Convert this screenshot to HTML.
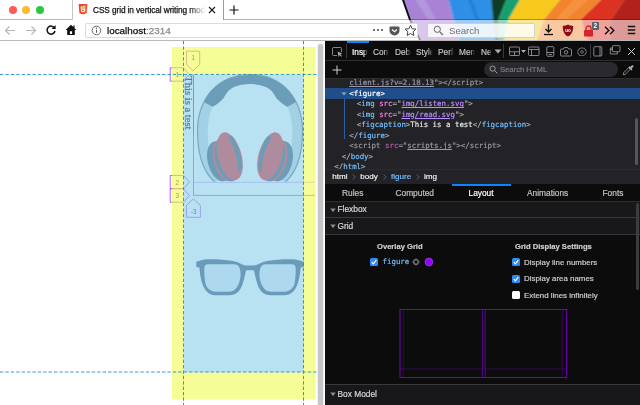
<!DOCTYPE html>
<html lang="en">
<head>
<meta charset="utf-8">
<title>CSS grid in vertical writing mode</title>
<style>
*{box-sizing:border-box;margin:0;padding:0}
html,body{width:640px;height:405px;overflow:hidden;background:#fff}
body{position:relative;font-family:"Liberation Sans",sans-serif;font-size:8px;color:#0c0c0d}
.abs{position:absolute}
#stage{position:absolute;left:0;top:0;width:640px;height:405px;overflow:hidden;will-change:transform}
/* ---------- browser chrome ---------- */
#chrome{position:absolute;left:0;top:0;width:640px;height:41px;overflow:hidden;background:#fff}
#flag{position:absolute;left:0;top:0;width:640px;height:41px}
#navveil{position:absolute;left:0;top:20px;width:640px;height:21px;background:rgba(255,255,255,.55)}
#tabline{position:absolute;left:0;top:19px;width:640px;height:1px;background:rgba(0,0,0,.28)}
#chromeline{position:absolute;left:0;top:40px;width:640px;height:1px;background:#b9b9b9}
#tab{position:absolute;left:72px;top:0;width:152px;height:20px;background:#fff;border-left:1px solid #c4c4c4;border-right:1px solid #9a9a9a}
#tabtitle{-webkit-text-stroke:.25px currentColor;position:absolute;left:93px;top:4px;width:112px;height:12px;font-size:8.3px;letter-spacing:-.1px;line-height:12px;white-space:nowrap;overflow:hidden;color:#111;
 -webkit-mask-image:linear-gradient(90deg,#000 86%,transparent 100%);mask-image:linear-gradient(90deg,#000 86%,transparent 100%)}
.tl{position:absolute;top:6px;width:8px;height:8px;border-radius:50%}
#urlbar{position:absolute;left:85px;top:23px;width:333px;height:15px;background:#fff;border:1px solid #dadada;border-radius:2px}
#urltext{-webkit-text-stroke:.25px currentColor;position:absolute;left:107px;top:24px;font-size:9.9px;line-height:13px;white-space:nowrap;color:#0c0c0d}
#urltext span{color:#8a8a8a}
#searchbar{position:absolute;left:427px;top:23px;width:108px;height:15px;background:rgba(255,255,255,.8);border:1px solid rgba(190,190,190,.7);border-radius:2px}
#searchtext{position:absolute;left:449px;top:24px;font-size:9.6px;line-height:13px;color:#6f6f6f}
/* ---------- page ---------- */
#page{position:absolute;left:0;top:41px;width:325px;height:364px;background:#fff;overflow:hidden}
#pscroll{position:absolute;left:318.200px;top:43.500px;width:5.200px;height:370px;background:#c6c6c6;border-radius:2.600px;box-shadow:0 0 0 .5px #e4e4e4}
#splitter{display:none}
/* ---------- devtools ---------- */
#dt{-webkit-text-stroke-width:.18px;position:absolute;left:325px;top:41px;width:315px;height:364px;background:#232327;overflow:hidden;color:#b1b1b3;font-size:7.6px}

#dti{position:absolute;left:-325px;top:-41px;width:640px;height:405px}
.ttab{position:absolute;top:46px;height:12px;font-size:8.300px;line-height:12px;white-space:nowrap;overflow:hidden;color:#c4c4c7;
 -webkit-mask-image:linear-gradient(90deg,#000 70%,transparent 100%);mask-image:linear-gradient(90deg,#000 70%,transparent 100%)}
.ttab.sel{color:#fff}
.ml{position:absolute;font-family:"DejaVu Sans Mono","Liberation Mono",monospace;font-size:7.425px;line-height:11px;white-space:pre;color:#a9a9ac}
.ml i{font-style:normal;color:#75bfff}
.ml b{font-weight:normal;color:#ff7de9}
.ml u{color:#b98eff}
.ml em{font-style:normal;color:#e6e6e8}
.ml.dim{color:#98989c}.ml.dim i{color:#98989c}.ml.dim b{color:#b45aa6}.ml.dim u{color:#9d9aa8}
.ml.selrow{color:#fff}
.bc{position:absolute;top:171px;font-size:8.100px;line-height:11px;color:#f0f0f2;white-space:nowrap}
.bcs{position:absolute;top:171px;font-size:8.500px;line-height:11px;color:#6f7f99}
.stab{position:absolute;top:188px;font-size:8.350px;line-height:11px;color:#c4c4c7;white-space:nowrap}

.acc{position:absolute;left:325px;width:315px;height:16px;background:#18181a}
.accl{position:absolute;left:325px;width:315px;height:1px;background:#38383d}
.acct{position:absolute;left:337.500px;font-size:8.350px;line-height:11px;color:#d7d7db;white-space:nowrap}
.gh{position:absolute;font-size:7.600px;font-weight:bold;line-height:11px;color:#d0d0d3;white-space:nowrap}
.gl{position:absolute;left:524px;font-size:7.900px;line-height:11px;color:#d0d0d3;white-space:nowrap}
.cb{position:absolute;width:8px;height:8px;border-radius:1.500px;background:#fff}
.cb.on{background:#2b8cf7}
.cb svg{position:absolute;left:0;top:0}
</style>
</head>
<body>
<div id="stage">

<!-- ======= BROWSER CHROME ======= -->
<div id="chrome">
  <svg id="flag" viewBox="0 0 640 41" preserveAspectRatio="none">
    <defs><filter id="fb" x="-5%" y="-20%" width="110%" height="140%"><feGaussianBlur stdDeviation="1.100 .6"/></filter></defs>
    <g filter="url(#fb)">
      <polygon points="402.500,-2 409.900,19.5 421.500,43 459.5,43 453.6,19.5 448.2,-2" fill="#a882d4"/>
      <polygon points="448.2,-2 453.6,19.5 459.5,43 495.500,43 493,19.5 491,-2" fill="#2e8fe6"/>
      <polygon points="491,-2 493,19.5 495.500,43 498.500,43 498.500,19.5 507,-2" fill="#0d3d26"/>
      <polygon points="507,-2 498.500,19.5 498.500,43 504,43 508.500,19.5 521,-2" fill="#18a070"/>
      <polygon points="521,-2 508.500,19.5 504,43 536,43 544,19.5 561.5,-2" fill="#f6c91c"/>
      <polygon points="561.5,-2 544,19.5 536,43 589,43 581,19.5 603,-2" fill="#f2842e"/>
      <polygon points="603,-2 581,19.5 589,43 611,43 611,19.5 625.5,-2" fill="#dc3320"/>
      <polygon points="625.5,-2 611,19.5 611,43 650,43 650,19.5 650,-2" fill="#b2211c"/>
      <polygon points="414,-2 424,-2 436,19.5 428,19.5" fill="#b79be0" opacity=".8"/>
      <polygon points="468,-2 471,-2 479,19.5 476,19.5" fill="#1f74c8" opacity=".7"/>
      <polygon points="575,-2 590,-2 566,19.5 556,19.5" fill="#f7984a" opacity=".7"/>
    </g>
    <polygon points="401.300,-2 403.500,-2 410.900,19.500 422.600,43 420.600,43 408.900,19.500" fill="#120e16"/>
  </svg>
  <div id="navveil"></div>
  <div id="tabline"></div>
  <div id="tab"></div>
  <div class="tl" style="left:9px;background:#fc5b57"></div>
  <div class="tl" style="left:22px;background:#fdbc2e"></div>
  <div class="tl" style="left:36px;background:#28c93f"></div>
  <!-- html5 favicon -->
  <svg class="abs" style="left:78px;top:4px" width="10" height="11" viewBox="0 0 10 11">
    <path d="M0.6 0h8.8l-0.8 9.2L5 10.4 1.4 9.2z" fill="#e44d26"/>
    <path d="M5 0.8v8.8l2.9-0.9 0.7-7.9z" fill="#f16529"/>
    <path d="M2.6 2.4h4.9l-.1 1.2H3.8l.1 1h3.4l-.3 3L5 8.2l-2-.6-.1-1.500h1.100l.1.700.9.300.9-.3.100-1.100H2.900z" fill="#fff"/>
  </svg>
  <div id="tabtitle">CSS grid in vertical writing mode</div>
  <svg class="abs" style="left:208px;top:6px" width="8" height="8" viewBox="0 0 8 8"><path d="M1 1l6 6M7 1l-6 6" stroke="#1a1a1a" stroke-width="1.1" fill="none"/></svg>
  <svg class="abs" style="left:229px;top:5px" width="10" height="10" viewBox="0 0 10 10"><path d="M5 0.500v9M0.500 5h9" stroke="#111" stroke-width="1.2" fill="none"/></svg>

  <!-- nav buttons -->
  <svg class="abs" style="left:4px;top:25px" width="12" height="11" viewBox="0 0 12 11"><path d="M11 5.500H1.500M5.500 1.500l-4 4 4 4" stroke="#b4b4b4" stroke-width="1.100" fill="none"/></svg>
  <svg class="abs" style="left:25px;top:25px" width="12" height="11" viewBox="0 0 12 11"><path d="M1 5.500h9.500M6.500 1.500l4 4-4 4" stroke="#b4b4b4" stroke-width="1.100" fill="none"/></svg>
  <svg class="abs" style="left:45px;top:24px" width="12" height="12" viewBox="0 0 12 12"><path d="M9.600 4.200A4 4 0 1 0 10 7" stroke="#111" stroke-width="1.500" fill="none"/><path d="M10.600 1v4h-4z" fill="#111"/></svg>
  <svg class="abs" style="left:65px;top:24px" width="12" height="12" viewBox="0 0 12 12"><path d="M6 0.800L0.600 6h1.600v5h7.600V6h1.600L9.600 4.300V1.500H8.400v1.600zM4.900 7.300h2.200v2.600H4.900z" fill="#111" fill-rule="evenodd"/></svg>

  <div id="urlbar"></div>
  <svg class="abs" style="left:91px;top:25px" width="11" height="11" viewBox="0 0 11 11"><circle cx="5.500" cy="5.500" r="4.300" fill="none" stroke="#5a5a5a" stroke-width=".9"/><path d="M5.500 4.800v3" stroke="#5a5a5a" stroke-width="1"/><circle cx="5.500" cy="3.300" r=".7" fill="#5a5a5a"/></svg>
  <div id="urltext">localhost<span>:2314</span></div>
  <!-- page actions -->
  <svg class="abs" style="left:372px;top:28px" width="12" height="4" viewBox="0 0 12 4"><circle cx="2" cy="2" r="1.100" fill="#555"/><circle cx="6" cy="2" r="1.100" fill="#555"/><circle cx="10" cy="2" r="1.100" fill="#555"/></svg>
  <svg class="abs" style="left:389px;top:26px" width="11" height="10" viewBox="0 0 11 10"><path d="M1.500 0.500h8a1 1 0 0 1 1 1v3a5 5 0 0 1-10 0v-3a1 1 0 0 1 1-1z" fill="#555"/><path d="M3 3.500l2.500 2.300L8 3.500" stroke="#fff" stroke-width="1.200" fill="none"/></svg>
  <svg class="abs" style="left:404px;top:24px" width="13" height="13" viewBox="0 0 13 13"><path d="M6.500 1.200l1.600 3.500 3.800.4-2.800 2.600.8 3.800-3.400-2-3.400 2 .8-3.800L1.100 5.100l3.800-.4z" fill="none" stroke="#444" stroke-width="1"/></svg>

  <div id="searchbar"></div>
  <svg class="abs" style="left:433px;top:25px" width="11" height="11" viewBox="0 0 11 11"><circle cx="4.300" cy="4.300" r="3.100" fill="none" stroke="#666" stroke-width="1"/><path d="M6.600 6.600l3.400 3.400" stroke="#666" stroke-width="1.200"/></svg>
  <div id="searchtext">Search</div>

  <!-- toolbar icons right -->
  <svg class="abs" style="left:543px;top:24px" width="11" height="12" viewBox="0 0 11 12"><path d="M5.500 0.500v7M2.500 5l3 3 3-3" stroke="#111" stroke-width="1.300" fill="none"/><path d="M1 10.500h9" stroke="#111" stroke-width="1.300"/></svg>
  <svg class="abs" style="left:562px;top:24px" width="12" height="13" viewBox="0 0 12 13"><path d="M6 0.500c1.800 1 3.400 1.300 5.200 1.400 0 5-1.200 8.300-5.200 10.600C2 10.200.8 6.900.8 1.900 2.600 1.800 4.200 1.500 6 .5z" fill="#8f0a12"/><text x="6" y="8.300" font-size="4.500" font-weight="bold" fill="#fff" text-anchor="middle" font-family="Liberation Sans, sans-serif">uo</text></svg>
  <svg class="abs" style="left:583px;top:25px" width="11" height="12" viewBox="0 0 11 12"><path d="M3 5V3.500a2.500 2.500 0 0 1 5 0V5" fill="none" stroke="#d7232c" stroke-width="1.400"/><rect x="1" y="5" width="9" height="6.500" rx=".8" fill="#d7232c"/></svg>
  <div class="abs" style="left:591.500px;top:21.500px;width:7.500px;height:8px;background:#5b6166;border-radius:1px;color:#fff;font-size:6.500px;line-height:8px;text-align:center;font-weight:bold">2</div>
  <svg class="abs" style="left:604px;top:26px" width="11" height="9" viewBox="0 0 11 9"><path d="M1 .7l3.800 3.800L1 8.300M6 .7l3.800 3.800L6 8.300" stroke="#111" stroke-width="1.400" fill="none"/></svg>
  <svg class="abs" style="left:626.500px;top:25px" width="9" height="10" viewBox="0 0 9 10"><path d="M.8 1.500h7.400M.8 5h7.400M.8 8.500h7.400" stroke="#111" stroke-width="1.300"/></svg>
  <div id="chromeline"></div>
</div>

<!-- ======= PAGE ======= -->
<div id="page">
<!--PAGE-START-->
<svg class="abs" style="left:0;top:0" width="318" height="364" viewBox="0 41 318 364">
  <!-- layer 1 : document content -->
  <g id="headphones">
    <!-- light shell -->
    <path d="M250 74.500C216 74.500 197.500 101 197.500 131C197.500 144 199 155 203 165C206 172 210 178 214.500 181.800L222 179C212 167 207.500 150 207.800 132c.1-9 1.200-17 4.200-24 4-9 18-27 38-27s34 18 38 27c3 7 4.100 15 4.200 24C292.500 150 288 167 278 179L285.500 181.800C290 178 294 172 297 165C301 155 302.500 144 302.500 131C302.500 101 284 74.500 250 74.500z" fill="#cfd3df"/>
    <path d="M214.500 181.800C210 178 206 172 203 165C199 155 197.500 144 197.500 131C197.500 101 216 74.500 250 74.500S302.500 101 302.500 131C302.500 144 301 155 297 165C294 172 290 178 285.500 181.800" fill="none" stroke="#3e506c" stroke-opacity=".8" stroke-width="1.200"/>
    <!-- dark head band -->
    <path d="M204 102C211 86 228 75 250 75s39 11 46 27l-8.500 4.800c-3-1.500-7.500-4.500-11.200-8.800-2.300-3.500-3.800-7.500-9.800-10.700C261.500 85 255.500 84 250 84s-11.500 1-16.500 3.300c-6 3.200-7.500 7.200-9.800 10.700-3.700 4.300-8.200 7.300-11.200 8.800z" fill="#3e506c"/>
    <!-- left cup -->
    <g>
      <ellipse cx="219.3" cy="161.3" rx="11.5" ry="20.5" fill="#3e506c" transform="rotate(-15 219.3 161.3)"/>
      <ellipse cx="224.8" cy="160" rx="11.5" ry="21.8" fill="#e8282b" transform="rotate(-15 224.8 160)"/>
      <ellipse cx="227.2" cy="159.6" rx="11.5" ry="22.2" fill="#3e506c" transform="rotate(-15 227.2 159.6)"/>
      <ellipse cx="229.8" cy="156.3" rx="11.8" ry="24.6" fill="#e8282b" transform="rotate(-15 229.8 156.3)"/>
      <ellipse cx="235.300" cy="155.300" rx="5" ry="18.500" fill="#3e506c" transform="rotate(-15 229.8 156.3)"/>
      <ellipse cx="230.900" cy="156.800" rx="5.300" ry="20" fill="#e8282b" transform="rotate(-15 229.8 156.3)"/>
    </g>
    <!-- right cup -->
    <g transform="translate(500 0) scale(-1 1)">
      <ellipse cx="219.3" cy="161.3" rx="11.5" ry="20.5" fill="#3e506c" transform="rotate(-15 219.3 161.3)"/>
      <ellipse cx="224.8" cy="160" rx="11.5" ry="21.8" fill="#e8282b" transform="rotate(-15 224.8 160)"/>
      <ellipse cx="227.2" cy="159.6" rx="11.5" ry="22.2" fill="#3e506c" transform="rotate(-15 227.2 159.6)"/>
      <ellipse cx="229.8" cy="156.3" rx="11.8" ry="24.6" fill="#e8282b" transform="rotate(-15 229.8 156.3)"/>
      <ellipse cx="235.300" cy="155.300" rx="5" ry="18.500" fill="#3e506c" transform="rotate(-15 229.8 156.3)"/>
      <ellipse cx="230.900" cy="156.800" rx="5.300" ry="20" fill="#e8282b" transform="rotate(-15 229.8 156.3)"/>
    </g>
  </g>
  <g id="glasses">
    <path d="M250 265.4L246 265.4C242 265.4 239 261.8 233 261C225 259.6 214 259 208 259.3C203 259.5 199 260.8 196.3 261.7L196.3 266.5Q196.4 267.5 199.4 267.6C199.8 274 201 281 203.1 285.8C205.5 291.5 209.5 295.2 215.5 295.2L229 295.2C236 295.2 240 291.5 242.3 285C243.8 280.5 245 275 245.8 271.2Q246 270.3 247.2 270.3L250 270.3L252.8 270.3Q254 270.3 254.2 271.2C255 275 256.2 280.5 257.7 285C260 291.5 264 295.2 271 295.2L284.5 295.2C290.5 295.2 294.5 291.5 296.9 285.8C299 281 300.2 274 300.6 267.6Q303.6 267.5 303.7 266.5L303.7 261.7C301 260.8 297 259.5 292 259.3C286 259 275 259.6 267 261C261 261.8 258 265.4 254 265.4L250 265.4Z" fill="#3d4d74"/>
    <path id="lens" d="M208 264.2H234Q238.5 264.2 239.8 268.5C240.8 272 240.9 276 240 279.6C238.8 284.5 236.5 291.6 229 291.8H217C210.5 291.8 207 288.500 205.6 284C204.5 279 204.2 273 204.3 268.5Q204.4 264.2 208 264.2Z" fill="#e4e8f4"/>
    <use href="#lens" transform="translate(500 0) scale(-1 1)"/>
  </g>
  <text transform="translate(185.400 76.200) rotate(90)" font-family="Liberation Serif, serif" font-size="10.600" fill="#000" stroke="#000" stroke-width=".22">This is a test</text>

  <!-- layer 2 : css grid overlay (#9400ff) -->
  <g fill="none" stroke="#9400ff" stroke-width=".7">
    <path d="M193.500 75V195.400"/>
    <path d="M193.500 182.300H315" stroke-width=".35"/>
    <path d="M193.500 195.400H315"/>
    <path d="M183.500 75H193.500V135" stroke-width=".6"/>
  </g>
  <g fill="#fff" stroke="#9400ff" stroke-width=".65" stroke-linejoin="round">
    <path d="M186.500 51.200h13.200v13.200l-6.600 6.400-6.600-6.400z"/>
    <path d="M170.200 67.800h13.300l5.600 6.700-5.600 6.700h-13.300z"/>
    <path d="M170.200 175.500h13.300l6 6.700-6 6.600h-13.300z"/>
    <path d="M170.200 188.800h13.300l6 6.700-6 6.700h-13.300z"/>
    <path d="M193.400 199l7 6.300v12h-14v-12z"/>
  </g>
  <g font-family="Liberation Sans, sans-serif" font-size="6.300" fill="#222" text-anchor="middle">
    <text x="193.200" y="60.200">1</text>
    <text x="177.400" y="76.900">1</text>
    <text x="177.200" y="184.500">2</text>
    <text x="177.200" y="197.800">3</text>
    <text x="193.600" y="213.600">-3</text>
  </g>

  <!-- layer 3 : box-model highlighter (opacity .6) -->
  <g opacity=".6">
    <path d="M172 47h143.500v352.500H172zM183.800 74.800v297.400h119.900V74.800z" fill="#f0fc52" fill-rule="evenodd"/>
    <rect x="183.800" y="74.800" width="119.900" height="297.400" fill="#89cfeb"/>
  </g>
  <!-- guides -->
  <g stroke="#1d8fd0" stroke-width=".9" stroke-dasharray="3.400 2" fill="none">
    <path d="M0 74.450H318"/>
    <path d="M0 372H318"/>
    <path d="M183.500 41V405"/>
    <path d="M303.500 41V405"/>
  </g>
</svg>
<!--PAGE-END-->
</div>
<div id="pscroll"></div>
<div id="splitter"></div>

<!-- ======= DEVTOOLS ======= -->
<div id="dt">
<div id="dti">
  <!-- main toolbar -->
  <div class="abs" style="left:325px;top:41px;width:315px;height:20px;background:#0c0c0d"></div>
  <div class="abs" style="left:325px;top:60px;width:315px;height:1px;background:#2e2e32"></div>
  <div class="abs" style="left:347px;top:41px;width:22px;height:1.500px;background:#0a84ff"></div>
  <!-- element picker -->
  <svg class="abs" style="left:332px;top:46.500px" width="11" height="11" viewBox="0 0 11 11"><path d="M9.500 5V1.500a1 1 0 0 0-1-1h-7a1 1 0 0 0-1 1v6a1 1 0 0 0 1 1H5" fill="none" stroke="#adadb1" stroke-width=".75"/><path d="M5.600 4.600l4.600 1.900-1.900.8 1.600 1.700-.8.800-1.600-1.700-.9 1.900z" fill="#adadb1"/></svg>
  <div class="abs" style="left:346px;top:44px;width:1px;height:14px;background:#38383d"></div>
  <div class="ttab sel" style="left:352px;width:16px">Inspector</div>
  <div class="ttab" style="left:373px;width:16px">Console</div>
  <div class="ttab" style="left:395px;width:16px">Debugger</div>
  <div class="ttab" style="left:416px;width:17px">Style Editor</div>
  <div class="ttab" style="left:438px;width:16px">Performance</div>
  <div class="ttab" style="left:459px;width:16px">Memory</div>
  <div class="ttab" style="left:481px;width:11px">Network</div>
  <svg class="abs" style="left:494px;top:49px" width="8" height="5" viewBox="0 0 8 5"><path d="M.5.5h7L4 4.500z" fill="#adadb1"/></svg>
  <div class="abs" style="left:503px;top:44px;width:1px;height:14px;background:#38383d"></div>
  <!-- right icons -->
  <svg class="abs" style="left:509px;top:46px" width="18" height="11" viewBox="0 0 18 11"><rect x=".5" y="1" width="10" height="8.500" rx=".8" fill="none" stroke="#adadb1" stroke-width=".75"/><path d="M.5 5.800h10M5.500 5.800v3.700" stroke="#adadb1" stroke-width=".75"/><path d="M12 4h5l-2.500 3z" fill="#adadb1"/></svg>
  <svg class="abs" style="left:528px;top:46px" width="12" height="11" viewBox="0 0 12 11"><rect x=".5" y="1" width="10.500" height="8.500" rx=".8" fill="none" stroke="#adadb1" stroke-width=".75"/><path d="M.5 3.500h10.500M3.500 3.500v6" stroke="#adadb1" stroke-width=".75"/></svg>
  <svg class="abs" style="left:546px;top:46px" width="9" height="11" viewBox="0 0 9 11"><rect x=".8" y=".7" width="7" height="9.600" rx=".8" fill="none" stroke="#adadb1" stroke-width=".75"/><path d="M.8 6.500h7M2.500 8.500h3.500" stroke="#adadb1" stroke-width=".75"/></svg>
  <svg class="abs" style="left:560px;top:46px" width="12" height="11" viewBox="0 0 12 11"><path d="M1.500 3h2l.8-1.500h3.400L8.500 3h2a1 1 0 0 1 1 1v5a1 1 0 0 1-1 1h-9a1 1 0 0 1-1-1V4a1 1 0 0 1 1-1z" fill="none" stroke="#adadb1" stroke-width=".75"/><circle cx="6" cy="6.300" r="1.700" fill="none" stroke="#adadb1" stroke-width=".75"/></svg>
  <svg class="abs" style="left:577px;top:46.500px" width="10" height="9.500" viewBox="0 0 12 11.500"><path d="M6 .6l1.200 1.100 1.600-.3.600 1.500 1.500.6-.3 1.600L11.700 6l-1.100 1-.3 1.500-1.500.6-.6 1.500-1.600-.3L6 11.200 4.800 10.300l-1.600.3-.6-1.500-1.500-.6.300-1.600L.3 6l1.100-.9-.3-1.600 1.500-.6.600-1.500 1.600.3z" fill="none" stroke="#adadb1" stroke-width=".75"/><circle cx="6" cy="5.900" r="1.600" fill="none" stroke="#adadb1" stroke-width=".75"/></svg>
  <div class="abs" style="left:590px;top:44px;width:1px;height:14px;background:#38383d"></div>
  <svg class="abs" style="left:593px;top:46px" width="10" height="11" viewBox="0 0 10 11"><rect x=".8" y=".7" width="8" height="9.300" rx=".8" fill="none" stroke="#adadb1" stroke-width=".75"/><path d="M7 .7v9.300" stroke="#adadb1" stroke-width=".75"/></svg>
  <svg class="abs" style="left:609px;top:45px" width="12" height="12" viewBox="0 0 12 12"><rect x="3.500" y=".7" width="7.500" height="6" rx=".6" fill="none" stroke="#adadb1" stroke-width=".75"/><path d="M3.500 3H1.300v6h7V7" fill="none" stroke="#adadb1" stroke-width=".75"/><path d="M1.300 4.500h2" stroke="#adadb1" stroke-width=".75"/></svg>
  <svg class="abs" style="left:627px;top:47px" width="9" height="9" viewBox="0 0 9 9"><path d="M1 1l7 7M8 1L1 8" stroke="#d0d0d3" stroke-width="1" fill="none"/></svg>

  <!-- inspector search toolbar -->
  <div class="abs" style="left:325px;top:61px;width:315px;height:18px;background:#0c0c0d"></div>
  <div class="abs" style="left:325px;top:78px;width:315px;height:1px;background:#2e2e32"></div>
  <svg class="abs" style="left:332px;top:65px" width="10" height="10" viewBox="0 0 10 10"><path d="M5 .5v9M.5 5h9" stroke="#d0d0d3" stroke-width="1" fill="none"/></svg>
  <div class="abs" style="left:484px;top:62px;width:134px;height:15px;background:#2a2a2e;border-radius:7.500px"></div>
  <svg class="abs" style="left:489px;top:65px" width="9" height="9" viewBox="0 0 9 9"><circle cx="3.600" cy="3.600" r="2.600" fill="none" stroke="#a8a8ab" stroke-width=".9"/><path d="M5.500 5.500l2.800 2.800" stroke="#a8a8ab" stroke-width=".9"/></svg>
  <div class="abs" style="left:500px;top:64px;font-size:7.650px;line-height:11px;color:#7e7e82;white-space:nowrap">Search HTML</div>
  <svg class="abs" style="left:622px;top:64px" width="12" height="12" viewBox="0 0 12 12"><path d="M1.200 10.800l.6-2.200 4.900-4.900 1.600 1.600-4.900 4.900z" fill="none" stroke="#adadb1" stroke-width=".75"/><path d="M6.300 3.300l1-1 .8.800 1.600-1.600a1 1 0 0 1 1.500 1.500L9.600 4.600l.8.800-1 1z" fill="#adadb1"/></svg>

  <!-- markup view -->
  <div class="abs" style="left:325px;top:79px;width:315px;height:90px;background:#232327"></div>
  <div class="abs" style="left:325px;top:88px;width:315px;height:10.500px;background:#204e8a"></div>
  <div class="abs" style="left:343.700px;top:98.500px;width:1px;height:40px;background:#2c5fa3"></div>
  <svg class="abs" style="left:341px;top:91.500px" width="6" height="4" viewBox="0 0 6 4"><path d="M.3.300h5.400L3 3.800z" fill="#7f98bd"/></svg>
  <div class="ml dim" style="left:349.300px;top:77.300px"><u class="av">client.js?v=2.18.13</u>"&gt;&lt;/<i>script</i>&gt;</div>
  <div class="ml selrow" style="left:349.300px;top:87.800px">&lt;figure&gt;</div>
  <div class="ml" style="left:356.800px;top:98.300px">&lt;<i>img</i> <b>src</b>="<u class="av">img/listen.svg</u>"&gt;</div>
  <div class="ml" style="left:356.800px;top:108.800px">&lt;<i>img</i> <b>src</b>="<u class="av">img/read.svg</u>"&gt;</div>
  <div class="ml" style="left:356.800px;top:119.200px">&lt;<i>figcaption</i>&gt;<em>This is a test</em>&lt;/<i>figcaption</i>&gt;</div>
  <div class="ml" style="left:349.300px;top:129.800px">&lt;/<i>figure</i>&gt;</div>
  <div class="ml dim" style="left:349.300px;top:140.300px">&lt;<i>script</i> <b>src</b>="<u class="av">scripts.js</u>"&gt;&lt;/<i>script</i>&gt;</div>
  <div class="ml" style="left:341.800px;top:150.800px">&lt;/<i>body</i>&gt;</div>
  <div class="ml" style="left:334.300px;top:161.200px">&lt;/<i>html</i>&gt;</div>
  <div class="abs" style="left:635px;top:118px;width:3px;height:47px;background:#56565a;border-radius:1.500px"></div>

  <!-- breadcrumbs -->
  <div class="abs" style="left:325px;top:168.500px;width:315px;height:16px;background:#232327;border-top:1px solid #2d2d31"></div>
  <div class="bc" style="left:332.300px">html</div><svg class="abs" style="left:352.300px;top:174px" width="4" height="6" viewBox="0 0 4 6"><path d="M.8.600L3.200 3 .8 5.400" fill="none" stroke="#4f6288" stroke-width="1"/></svg>
  <div class="bc" style="left:360.300px">body</div><svg class="abs" style="left:382.800px;top:174px" width="4" height="6" viewBox="0 0 4 6"><path d="M.8.600L3.200 3 .8 5.400" fill="none" stroke="#4f6288" stroke-width="1"/></svg>
  <div class="bc" style="left:391px;color:#75bfff">figure</div><svg class="abs" style="left:416.400px;top:174px" width="4" height="6" viewBox="0 0 4 6"><path d="M.8.600L3.200 3 .8 5.400" fill="none" stroke="#4f6288" stroke-width="1"/></svg>
  <div class="bc" style="left:424px">img</div>

  <!-- sidebar tabs -->
  <div class="abs" style="left:325px;top:184px;width:315px;height:18px;background:#0c0c0d"></div>
  <div class="abs" style="left:325px;top:201px;width:315px;height:1px;background:#2e2e32"></div>
  <div class="abs" style="left:452px;top:184px;width:59px;height:1.500px;background:#0a84ff"></div>
  <div class="stab" style="left:342px">Rules</div>
  <div class="stab" style="left:395.500px">Computed</div>
  <div class="stab" style="left:468.500px;color:#fff">Layout</div>
  <div class="stab" style="left:527px">Animations</div>
  <div class="stab" style="left:602.500px">Fonts</div>
  <!-- layout panel -->
  <div class="abs" style="left:325px;top:202px;width:315px;height:203px;background:#0c0c0d"></div>
  <div class="acc" style="top:202px"></div><div class="accl" style="top:217px"></div>
  <div class="acc" style="top:218px"></div><div class="accl" style="top:234px"></div>
  <div class="acc" style="top:385px;height:20px"></div><div class="accl" style="top:384px"></div>
  <svg class="abs" style="left:329.500px;top:207.500px" width="6" height="5" viewBox="0 0 6 5"><path d="M.3.500h5.400L3 4.300z" fill="#8a8a8e"/></svg>
  <svg class="abs" style="left:329.500px;top:224px" width="6" height="5" viewBox="0 0 6 5"><path d="M.3.500h5.400L3 4.300z" fill="#8a8a8e"/></svg>
  <svg class="abs" style="left:329.500px;top:392px" width="6" height="5" viewBox="0 0 6 5"><path d="M.3.500h5.400L3 4.300z" fill="#8a8a8e"/></svg>
  <div class="acct" style="top:204px">Flexbox</div>
  <div class="acct" style="top:220.500px">Grid</div>
  <div class="acct" style="top:388.500px">Box Model</div>

  <div class="gh" style="left:377px;top:241px">Overlay Grid</div>
  <div class="gh" style="left:515px;top:241px">Grid Display Settings</div>
  <div class="cb on" style="left:370px;top:258px"><svg width="8" height="8" viewBox="0 0 8 8"><path d="M1.800 4.200l1.600 1.600 2.900-3.600" fill="none" stroke="#fff" stroke-width="1.200"/></svg></div>
  <div class="abs" style="left:382.500px;top:255.500px;font-family:'DejaVu Sans Mono','Liberation Mono',monospace;font-size:7.425px;line-height:11px;color:#75bfff">figure</div>
  <svg class="abs" style="left:412px;top:258px" width="8" height="8" viewBox="0 0 8 8"><rect x="2" y="2" width="4" height="4" fill="none" stroke="#a4a4a8" stroke-width=".8"/><path d="M4 .3v1.700M4 6v1.700M.3 4h1.700M6 4h1.700" stroke="#a4a4a8" stroke-width=".8"/></svg>
  <svg class="abs" style="left:424px;top:257px" width="10" height="10" viewBox="0 0 10 10"><circle cx="4.900" cy="5" r="3.900" fill="#9400ff" stroke="#b45cff" stroke-width=".5"/></svg>
  <div class="cb on" style="left:512px;top:258px"><svg width="8" height="8" viewBox="0 0 8 8"><path d="M1.800 4.200l1.600 1.600 2.900-3.600" fill="none" stroke="#fff" stroke-width="1.200"/></svg></div>
  <div class="cb on" style="left:512px;top:274.500px"><svg width="8" height="8" viewBox="0 0 8 8"><path d="M1.800 4.200l1.600 1.600 2.900-3.600" fill="none" stroke="#fff" stroke-width="1.200"/></svg></div>
  <div class="cb" style="left:512px;top:291px"></div>
  <div class="gl" style="top:256.500px">Display line numbers</div>
  <div class="gl" style="top:273px">Display area names</div>
  <div class="gl" style="top:289.500px">Extend lines infinitely</div>
  <!-- grid outline -->
  <svg class="abs" style="left:396px;top:305px" width="176" height="78" viewBox="396 305 176 78" fill="none">
    <rect x="400" y="309.500" width="166.700" height="68" stroke="#8a00ee" stroke-width=".8"/>
    <path d="M482.400 309.500v68M485.200 309.500v68" stroke="#7a00d4" stroke-width=".7"/>
    <path d="M400 369h166.700M403.400 309.500v68M562.200 309.500v68" stroke="#5a00a0" stroke-width=".5"/>
  </svg>
  <div class="abs" style="left:636px;top:203px;width:3px;height:87px;background:#3c3c40;border-radius:1.500px"></div>

</div>

</div>

</div>
</body>
</html>
